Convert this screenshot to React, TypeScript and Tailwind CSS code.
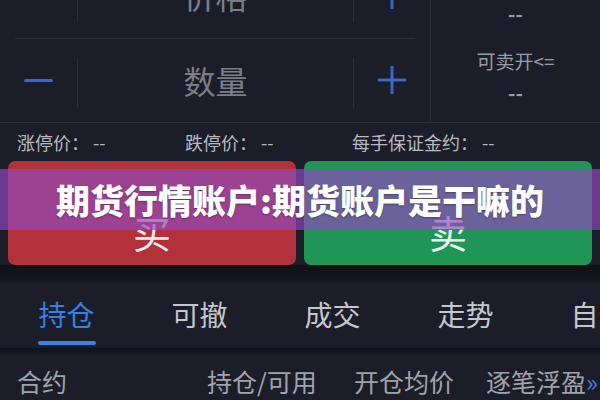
import React from 'react'

const line = 'bg-[#2b2d39]'

function Minus() {
  return <div className="h-[3px] w-[29px] rounded-sm bg-[#3a67c8]" />
}

function Plus() {
  return (
    <svg width="30" height="30" viewBox="0 0 30 30">
      <path d="M15 1v28M1 15h28" stroke="#3a67c8" strokeWidth="3" />
    </svg>
  )
}

// one stepper row: minus | value | plus
function StepRow({ label, h }: { label: string; h: string }) {
  return (
    <div className={`flex items-center ${h}`}>
      <div className="flex w-[77px] justify-center">
        <Minus />
      </div>
      <div className={`self-start mt-[19px] h-[50px] w-px ${line}`} />
      <div className="flex-1 text-center text-[32px] leading-[36px] text-[#7c7e87]">{label}</div>
      <div className={`self-start mt-[19px] h-[50px] w-px ${line}`} />
      <div className="flex w-[76px] justify-center">
        <Plus />
      </div>
    </div>
  )
}

const tabs = ['持仓', '可撤', '成交', '走势', '自选']

export default function App() {
  return (
    <div className="relative h-[400px] w-[600px] overflow-hidden bg-[#1b1d28] font-['Noto_Sans_CJK_SC','Noto_Sans',sans-serif]">
      {/* order form */}
      <div className="flex h-[123px] border-b border-[#2b2d39]">
        <div className="mt-[-47px] flex w-[431px] flex-col border-r border-[#2b2d39]">
          <StepRow label="价格" h="h-[85px]" />
          <div className={`mx-[15px] h-px ${line}`} />
          <StepRow label="数量" h="h-[84px]" />
        </div>
        <div className="flex flex-1 flex-col items-center text-[#9a9ca4]">
          <div className="mt-[4px] text-[20px] leading-[20px] font-bold">--</div>
          <div className="mt-[25px] text-[19px] leading-[24px]">可卖开&lt;=</div>
          <div className="mt-[10px] text-[20px] leading-[20px] font-bold">--</div>
        </div>
      </div>

      <div className="flex h-[38px] items-center pl-[17px] text-[18px] text-[#b9bac1]">
        <div className="w-[168px]">涨停价： --</div>
        <div className="w-[167px]">跌停价： --</div>
        <div>每手保证金约： --</div>
      </div>

      {/* buy / sell */}
      <div className="flex h-[104px] gap-[8px] px-[8px]">
        <button className="flex flex-1 items-center justify-center rounded-[7px] bg-[#b2323b] pt-[38px] text-[38px] leading-[40px] text-[#f3e9e9]">
          买
        </button>
        <button className="flex flex-1 items-center justify-center rounded-[7px] bg-[#1f9656] pt-[38px] text-[38px] leading-[40px] text-[#eef5ef]">
          卖
        </button>
      </div>

      <div className="h-[17px] bg-gradient-to-b from-[#111218] to-[#16171f]" />

      {/* tabs */}
      <div className="flex h-[66px] bg-[#1b1d28]">
        {tabs.map((t, i) => (
          <div key={t} className="flex w-[133px] shrink-0 flex-col items-center pt-[18px]">
            <div className={`text-[28px] leading-[28px] ${i === 0 ? 'text-[#3b7fdf]' : 'text-[#c6c7cd]'}`}>{t}</div>
            {i === 0 && <div className="mt-[13px] h-[4px] w-[58px] rounded-full bg-[#3b82e6]" />}
          </div>
        ))}
      </div>
      <div className="h-[6px] bg-gradient-to-b from-[#111218] to-[#17181f]" />

      <div className="flex items-center pl-[17px] pt-[15px] text-[25px] leading-[24px] text-[#a1a3ab]">
        <div className="w-[190px]">合约</div>
        <div className="w-[147px]">持仓/可用</div>
        <div className="w-[132px]">开仓均价</div>
        <div>逐笔浮盈</div>
        <div className="text-[#3b7de0]">»</div>
      </div>

      {/* title banner */}
      <div className="absolute left-0 right-0 top-[169px] flex h-[61px] items-center justify-center bg-[rgba(146,73,189,0.67)]">
        <div className="text-[34px] font-black leading-[40px] text-white [text-shadow:0_1px_2px_rgba(0,0,0,0.35)]">
          期货行情账户:期货账户是干嘛的
        </div>
      </div>
    </div>
  )
}
